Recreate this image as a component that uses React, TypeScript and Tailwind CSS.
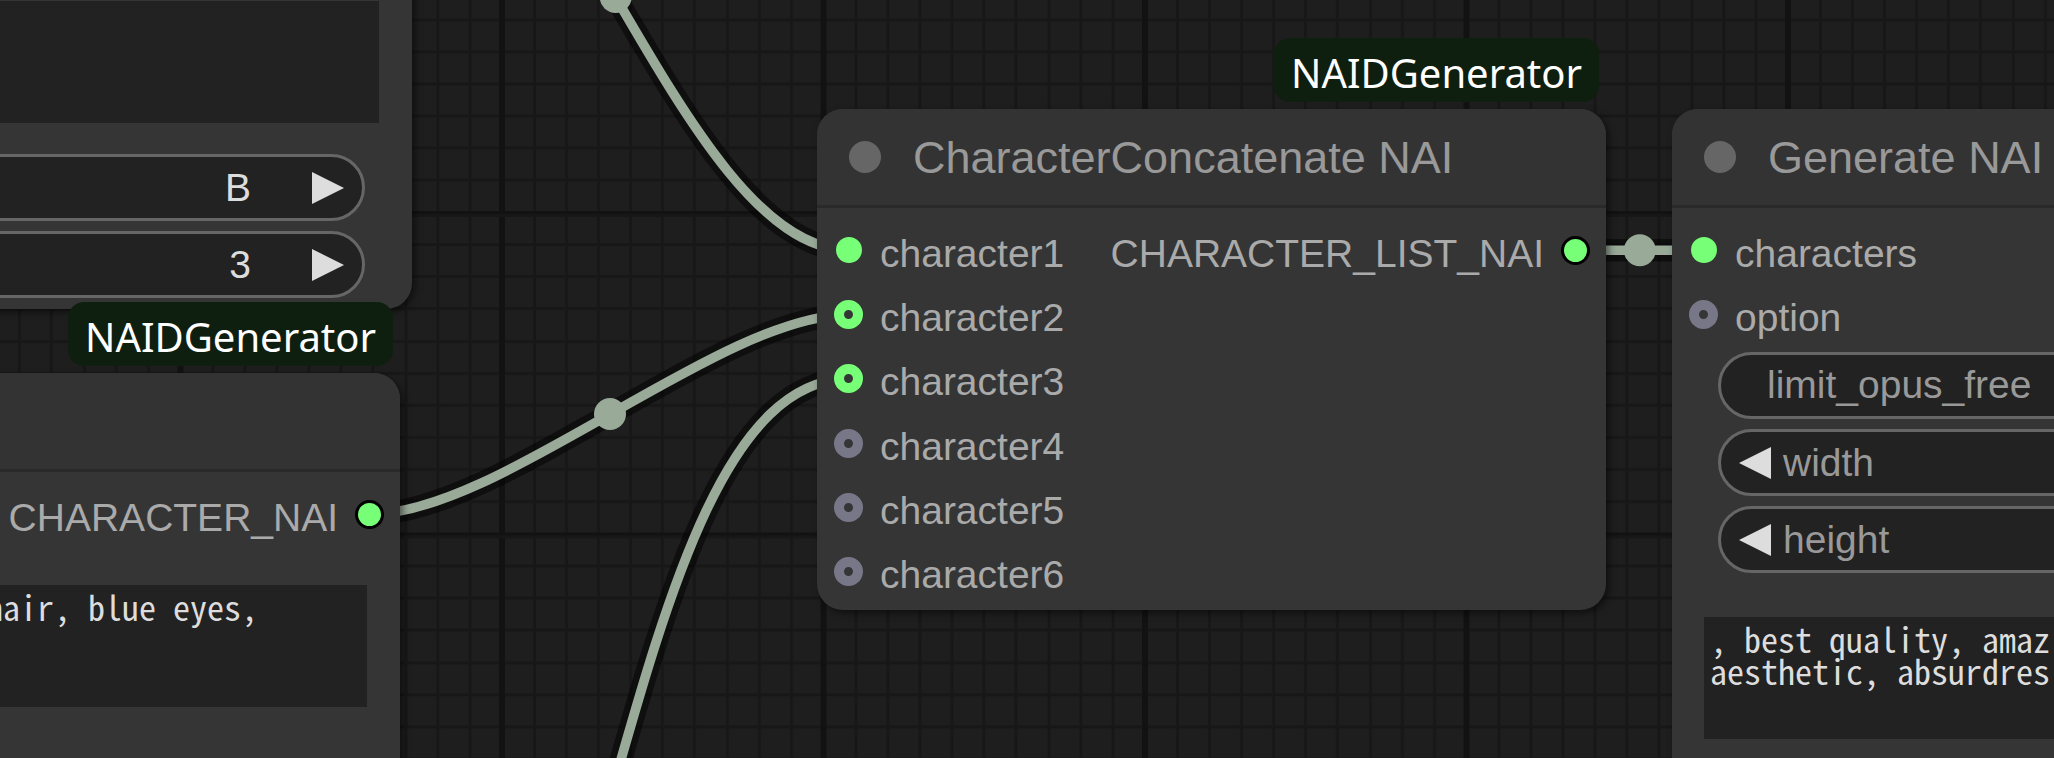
import React from "react";

type SlotKind = "solid" | "ring" | "idle";

const MONO = "font-['Noto_Sans_CJK_JP',monospace] [font-feature-settings:'hwid']";

function Grid() {
  const minor = [1, 2, 3, 4, 5, 6, 7, 8, 9].map((n) => n * 32.15);
  return (
    <svg className="absolute inset-0 h-full w-full" aria-hidden="true">
      <defs>
        <pattern id="grid" x="499" y="210" width="321.5" height="321.5" patternUnits="userSpaceOnUse">
          <rect width="321.5" height="321.5" fill="#1e1e1e" />
          {minor.map((p) => (
            <g key={p} fill="#171717">
              <rect x={Math.round(p + 1.5)} y="0" width="3" height="321.5" />
              <rect x="0" y={Math.round(p + 1)} width="321.5" height="3" />
            </g>
          ))}
          <rect x="0" y="0" width="6" height="321.5" fill="#121212" />
          <rect x="0" y="1" width="321.5" height="3" fill="#121212" />
          <rect x="0" y="4" width="321.5" height="3" fill="#171717" />
        </pattern>
      </defs>
      <rect width="100%" height="100%" fill="url(#grid)" />
    </svg>
  );
}

function Links() {
  const paths = [
    "M382 -256 C554 -256 677 250 849 250",
    "M370.5 514 C500 514 719.5 314.7 849 314.7",
    "M370.5 1218 C612 1218 608 379 849 379",
    "M1576 250.3 L1703 250.3",
  ];
  const dots = [
    [615.7, -3],
    [610, 414],
    [1639.8, 250.3],
  ];
  return (
    <svg className="absolute inset-0 h-full w-full" aria-hidden="true" fill="none">
      {paths.map((d) => (
        <g key={d}>
          <path d={d} stroke="#000" strokeOpacity="0.5" strokeWidth="22.5" />
          <path d={d} stroke="#99aa99" strokeWidth="9.6" />
        </g>
      ))}
      {dots.map(([x, y]) => (
        <circle key={x} cx={x} cy={y} r="16" fill="#99aa99" />
      ))}
    </svg>
  );
}

function Badge() {
  return (
    <div className="absolute right-[7px] bottom-full mb-[7px] flex h-16 items-center rounded-2xl bg-[#0f1f0f] px-[17px] pt-1.5 font-['Noto_Sans',sans-serif] text-[40px] leading-none whitespace-nowrap text-white">
      NAIDGenerator
    </div>
  );
}

function Header({ title }: { title?: string }) {
  return (
    <header className="flex h-[99px] items-center gap-8 rounded-t-[26px] border-b-3 border-[#2a2a2a] bg-[#333333] pl-8">
      {title && (
        <>
          <span className="size-8 rounded-full bg-[#666666]" />
          <h2 className="text-[45px] leading-none whitespace-nowrap text-[#999999]">{title}</h2>
        </>
      )}
    </header>
  );
}

function Dot({ kind }: { kind: SlotKind }) {
  return (
    <span className="flex size-[29px] shrink-0 items-center justify-center">
      {kind === "solid" && <span className="size-[26px] rounded-full bg-[#77ff77]" />}
      {kind === "ring" && <span className="size-[29px] rounded-full border-10 border-[#77ff77]" />}
      {kind === "idle" && <span className="size-[29px] rounded-full border-10 border-[#777788]" />}
    </span>
  );
}

function Input({ kind, name }: { kind: SlotKind; name: string }) {
  return (
    <li className="flex items-center gap-[17px]">
      <Dot kind={kind} />
      <span className="pt-1.5 leading-none">{name}</span>
    </li>
  );
}

function Output({ name }: { name: string }) {
  return (
    <div className="flex h-16 items-center justify-end gap-[17px] pr-4">
      <span className="pt-1.5 leading-none whitespace-nowrap">{name}</span>
      <span className="size-[29px] shrink-0 rounded-full border-3 border-black bg-[#77ff77]" />
    </div>
  );
}

function Arrow({ label, back }: { label: string; back?: boolean }) {
  return (
    <button type="button" aria-label={label} className="shrink-0">
      <svg width="32" height="32" viewBox="0 0 32 32" fill="#dddddd">
        {back ? <path d="M32 0 L0 16 L32 32 Z" /> : <path d="M0 0 L32 16 L0 32 Z" />}
      </svg>
    </button>
  );
}

const PILL = "flex h-[67px] w-full items-center rounded-full border-3 border-[#666666] bg-[#222222]";

function ValueWidget({ name, value }: { name: string; value: string }) {
  return (
    <div className={`${PILL} justify-end gap-[61px] pr-[18px]`}>
      <input
        aria-label={name}
        defaultValue={value}
        className="w-40 bg-transparent pt-0.5 text-right text-[#dddddd] outline-none"
      />
      <Arrow label={`Next ${name}`} />
    </div>
  );
}

function NumberWidget({ name }: { name: string }) {
  return (
    <div className={`${PILL} gap-3 pl-[18px]`}>
      <Arrow label={`Decrease ${name}`} back />
      <label htmlFor={name} className="leading-none text-[#999999]">
        {name}
      </label>
      <input id={name} className="min-w-0 flex-1 bg-transparent text-right text-[#dddddd] outline-none" />
    </div>
  );
}

const NODE = "absolute flex flex-col bg-[#353535] shadow-[3px_3px_7px_rgba(0,0,0,0.5)]";
const AREA = `block h-[122px] resize-none overflow-hidden bg-[#222222] px-1.5 pt-1.5 text-[34px] leading-8 whitespace-pre text-[#dddddd] outline-none ${MONO}`;

export default function App() {
  return (
    <main className="relative h-screen w-full overflow-hidden bg-[#1e1e1e] font-['Liberation_Sans',Arial,sans-serif] text-[39px] text-[#aaaaaa]">
      <Grid />
      <Links />

      <section className={`${NODE} -top-4 -left-12 w-[460px] rounded-br-[26px] pt-[17px] pb-[11px]`}>
        <textarea aria-label="Text" className={`${AREA} ml-8 w-[395px]`} />
        <div className="mt-[31px] flex flex-col gap-[10px] pr-[47px]">
          <ValueWidget name="column" value="B" />
          <ValueWidget name="row" value="3" />
        </div>
      </section>

      <section className={`${NODE} top-[373px] -left-12 h-[480px] w-[448px] rounded-r-[26px]`}>
        <Badge />
        <Header />
        <div className="pt-[10px]">
          <Output name="CHARACTER_NAI" />
        </div>
        <textarea
          aria-label="Character prompt"
          className={`${AREA} mt-[39px] ml-7 w-[387px]`}
          defaultValue="hair, blue eyes,"
        />
      </section>

      <section className={`${NODE} top-[109px] left-[817px] w-[789px] rounded-[26px]`}>
        <Badge />
        <Header title="CharacterConcatenate NAI" />
        <div className="flex justify-between pt-[10px] pb-[6px] pl-[17px]">
          <ul className="grid h-[386px] grid-rows-6">
            <Input kind="solid" name="character1" />
            <Input kind="ring" name="character2" />
            <Input kind="ring" name="character3" />
            <Input kind="idle" name="character4" />
            <Input kind="idle" name="character5" />
            <Input kind="idle" name="character6" />
          </ul>
          <Output name="CHARACTER_LIST_NAI" />
        </div>
      </section>

      <section className={`${NODE} top-[109px] left-[1672px] h-[800px] w-[800px] rounded-[26px]`}>
        <Header title="Generate NAI" />
        <ul className="grid h-[139px] grid-rows-2 pt-[10px] pl-[17px]">
          <Input kind="solid" name="characters" />
          <Input kind="idle" name="option" />
        </ul>
        <div className="mt-[5px] flex flex-col gap-[10px] px-[46px]">
          <button type="button" role="switch" aria-checked="true" className={`${PILL} pl-[46px] text-[#999999]`}>
            limit_opus_free
          </button>
          <NumberWidget name="width" />
          <NumberWidget name="height" />
        </div>
        <textarea
          aria-label="Positive prompt"
          className={`${AREA} mx-8 mt-11`}
          defaultValue={", best quality, amaz\naesthetic, absurdres"}
        />
      </section>
    </main>
  );
}
